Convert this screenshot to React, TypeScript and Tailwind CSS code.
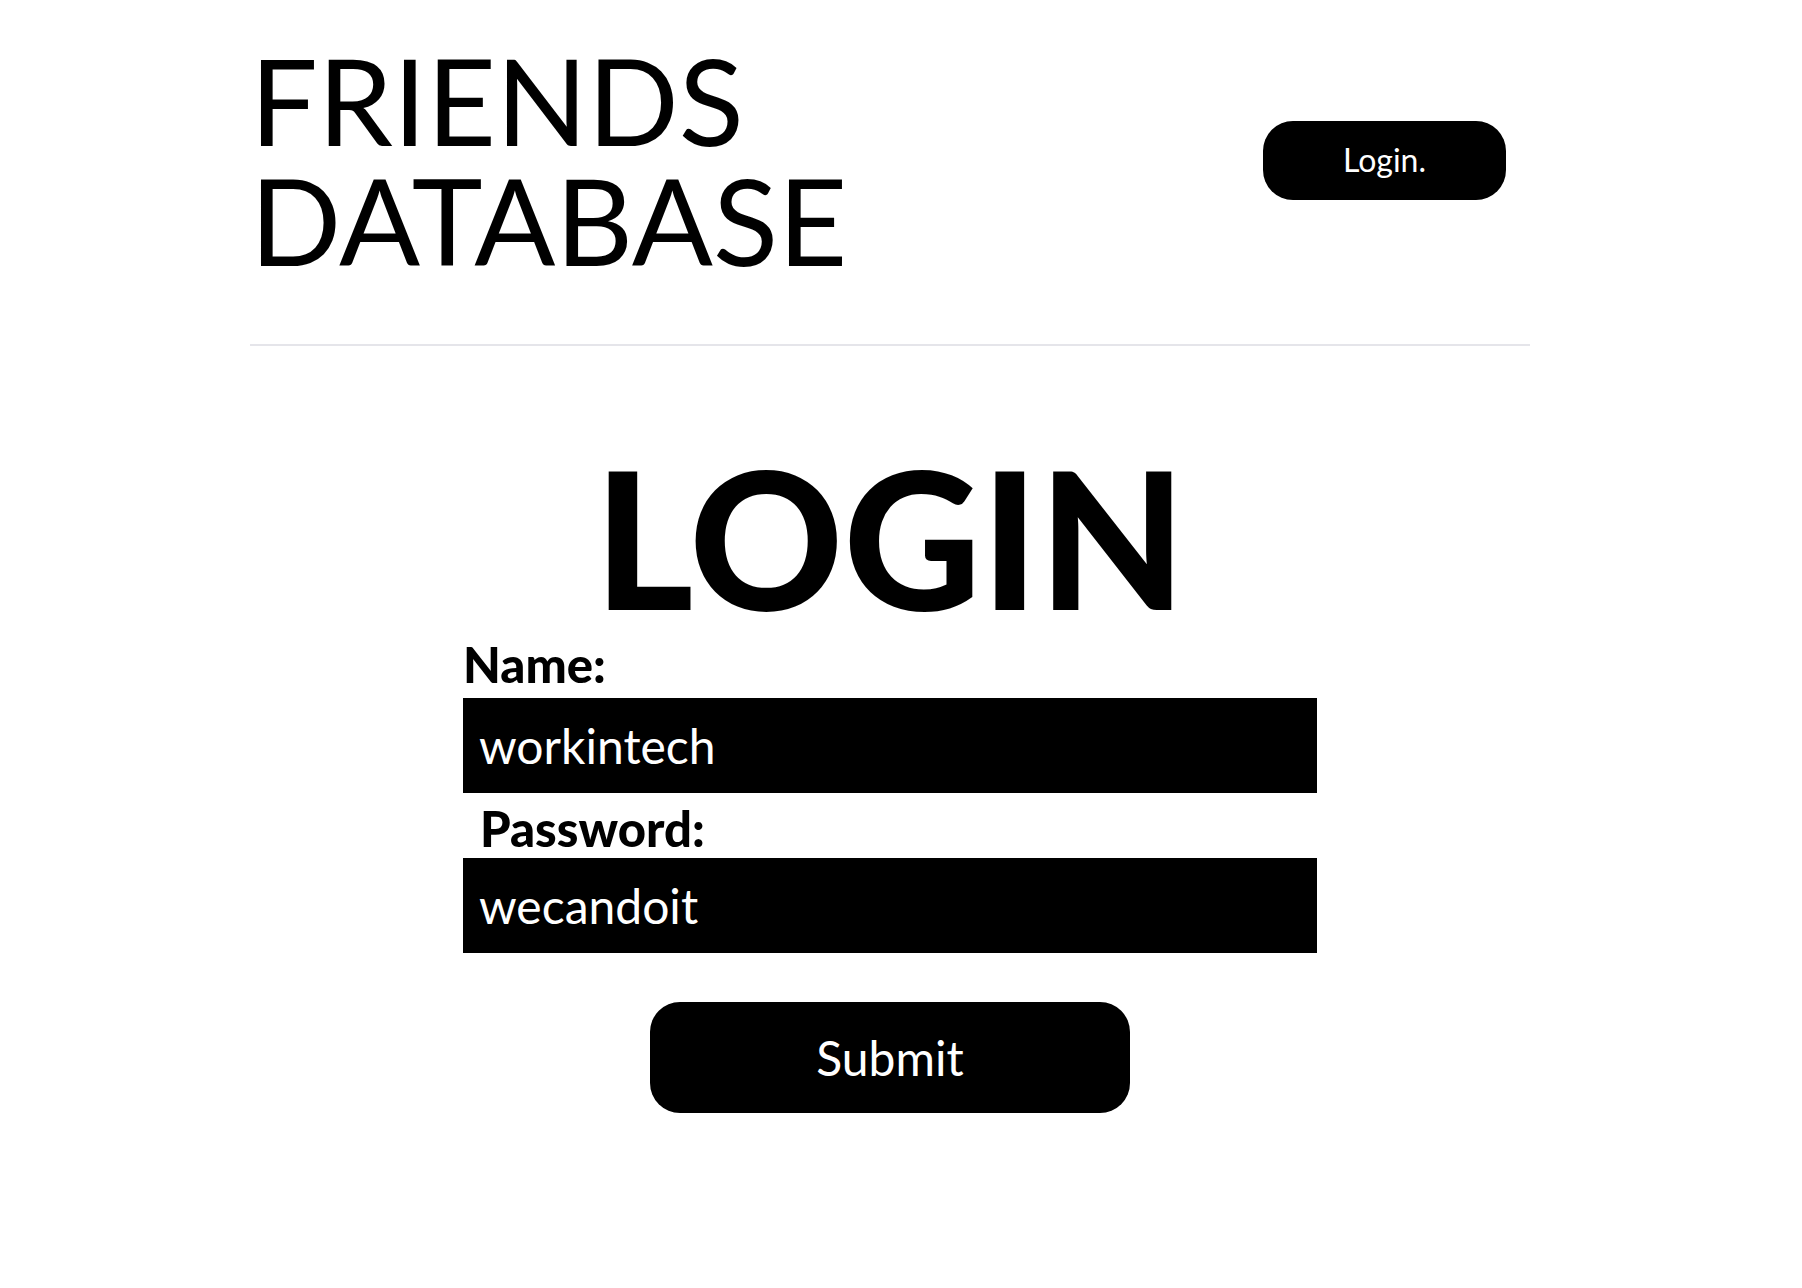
import React from "react";

export default function App() {
  return (
    <div className="min-h-screen w-[1780px] bg-white text-black font-['Lato',sans-serif]">
      <div className="mx-auto w-[1280px]">
        <header className="flex items-center justify-between pt-10 pb-16 pr-6">
          <h1 className="text-[120px] font-normal leading-none">
            FRIENDS
            <br />
            DATABASE
          </h1>
          <button className="flex h-[79px] w-[243px] items-center justify-center rounded-[30px] bg-black text-[32px] text-white">
            Login.
          </button>
        </header>
        <hr className="border-0 border-t-2 border-[#e5e5ea]" />
        <main className="flex flex-col items-center">
          <h2 className="mt-[95px] text-[190px] font-black leading-none">LOGIN</h2>
          <form className="flex w-[854px] flex-col" onSubmit={(e) => e.preventDefault()}>
            <label className="mt-[9px] text-[49px] font-black leading-none">Name:</label>
            <input
              readOnly
              defaultValue="workintech"
              className="mt-[9px] h-[95px] w-full bg-black px-4 text-[48px] text-white outline-none"
            />
            <label className="mt-[11px] pl-[17px] text-[49px] font-black leading-none">Password:</label>
            <input
              readOnly
              defaultValue="wecandoit"
              className="mt-[5px] h-[95px] w-full bg-black px-4 text-[48px] text-white outline-none"
            />
            <button
              type="submit"
              className="mt-[49px] flex h-[111px] w-[480px] items-center justify-center self-center rounded-[30px] bg-black text-[48px] text-white"
            >
              Submit
            </button>
          </form>
        </main>
      </div>
    </div>
  );
}
